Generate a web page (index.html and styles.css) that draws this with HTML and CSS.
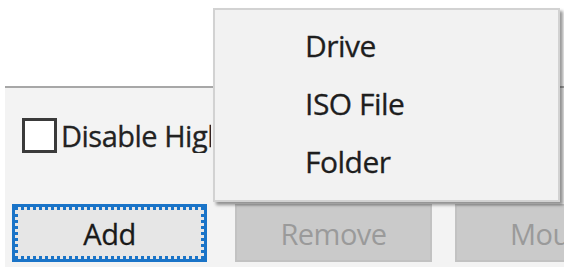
FILE: index.html
```html
<!DOCTYPE html>
<html>
<head>
<meta charset="utf-8">
<link rel="stylesheet" href="styles.css">
</head>
<body>
<div class="window">
  <div class="top"></div>
  <div class="group">
    <div class="check-row">
      <span class="checkbox"></span>
      <span class="check-label">Disable High DPI Scaling</span>
    </div>
    <div class="buttons">
      <button class="btn btn-focus"><span class="focus-ring">Add</span></button>
      <button class="btn btn-disabled btn-remove">Remove</button>
      <button class="btn btn-disabled btn-mount">Mount</button>
    </div>
  </div>
  <div class="menu">
    <div class="menu-item">Drive</div>
    <div class="menu-item">ISO File</div>
    <div class="menu-item">Folder</div>
  </div>
</div>
</body>
</html>
```

FILE: styles.css
```css
* { box-sizing: border-box; }
html, body { margin: 0; padding: 0; }
body {
  background: #ffffff;
  font-family: "Open Sans", "Noto Sans", sans-serif;
  width: 571px;
  height: 267px;
  overflow: hidden;
}
.window {
  position: relative;
  width: 564px;
  height: 267px;
  background: #ffffff;
  display: flex;
  flex-direction: column;
  overflow: hidden;
}
.top {
  height: 86px;
  flex: none;
}
.group {
  flex: 1;
  margin-left: 5px;
  border-top: 2px solid #a7a7a7;
  background: #f3f3f3;
  display: flex;
  flex-direction: column;
}
.check-row {
  display: flex;
  align-items: flex-start;
  gap: 4px;
  padding: 30px 0 0 17px;
  height: 96px;
}
.checkbox {
  flex: none;
  width: 35px;
  height: 35px;
  border: 3px solid #3a3a3a;
  background: #ffffff;
}
.check-label {
  font-size: 29px;
  line-height: 35px;
  color: #222222;
  white-space: nowrap;
  letter-spacing: -0.5px;
  max-width: 150px;
  overflow: hidden;
  -webkit-text-stroke: 0.3px #222222;
}
.buttons {
  display: flex;
  padding-left: 7px;
  gap: 28px;
  margin-top: 20px;
}
.btn {
  flex: none;
  font-family: inherit;
  font-size: 29px;
  height: 58px;
  padding: 0;
  margin: 0;
  letter-spacing: -0.5px;
  white-space: nowrap;
}
.btn-focus {
  width: 195px;
  background: #e3e3e3;
  border: 3px solid #1a74c8;
  color: #1a1a1a;
  display: flex;
  -webkit-text-stroke: 0.3px #1a1a1a;
}
.focus-ring {
  flex: 1;
  border: 3px dotted #1a74c8;
  display: flex;
  align-items: center;
  justify-content: center;
  background: #e6e6e6;
}
.btn-disabled {
  background: #cacaca;
  border: 2px solid #c2c2c2;
  color: #9a9a9a;
}
.btn-remove { width: 197px; }
.btn-mount {
  width: 197px;
  margin-left: -5px;
}
.menu {
  position: absolute;
  left: 213px;
  top: 8px;
  width: 347px;
  height: 194px;
  background: #f2f2f2;
  border: 2px solid #d2d2d2;
  box-shadow: 3px 3px 3px rgba(0, 0, 0, 0.4);
  padding-top: 7px;
  z-index: 2;
}
.menu-item {
  height: 58px;
  line-height: 58px;
  padding-left: 90px;
  font-size: 30px;
  color: #1e1e1e;
  letter-spacing: -0.5px;
  -webkit-text-stroke: 0.3px #1e1e1e;
}
```
